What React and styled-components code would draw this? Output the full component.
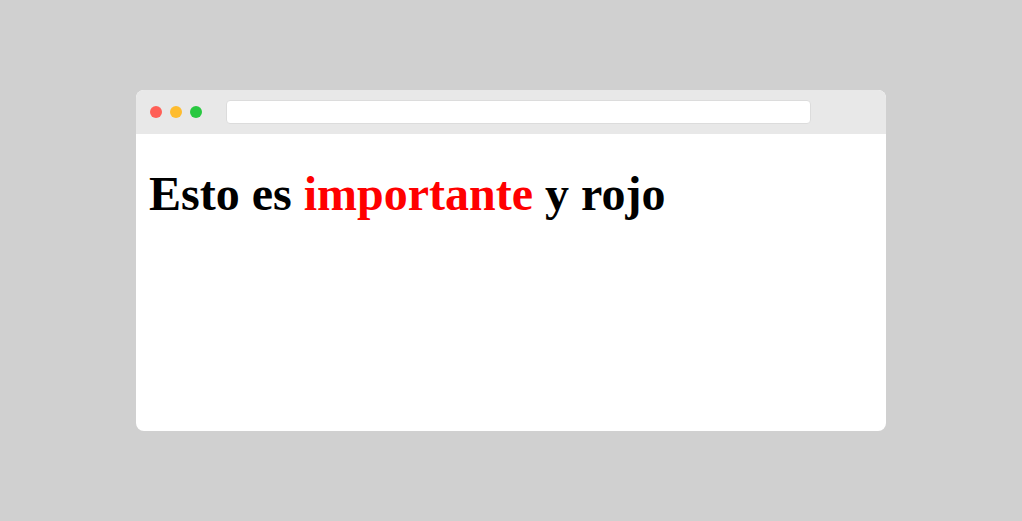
import React from "react";
import styled, { createGlobalStyle } from "styled-components";

const Global = createGlobalStyle`
  html, body { margin: 0; padding: 0; }
  body { background: #d0d0d0; width: 1022px; height: 521px; overflow: hidden; }
`;

const Page = styled.div`
  width: 1022px;
  height: 521px;
  display: flex;
  align-items: flex-start;
  justify-content: center;
  padding-top: 90px;
  box-sizing: border-box;
`;

const Window = styled.div`
  width: 750px;
  height: 341px;
  background: #ffffff;
  border-radius: 8px;
  overflow: hidden;
  display: flex;
  flex-direction: column;
`;

const TitleBar = styled.div`
  height: 44px;
  background: #e8e8e8;
  display: flex;
  align-items: center;
  padding: 0 14px;
  box-sizing: border-box;
`;

const Dots = styled.div`
  display: flex;
  gap: 8px;
`;

const Dot = styled.span`
  width: 12px;
  height: 12px;
  border-radius: 50%;
  background: ${(p) => p.$color};
`;

const AddressBar = styled.div`
  margin-left: 24px;
  width: 585px;
  height: 24px;
  background: #ffffff;
  border: 1px solid #dcdcdc;
  border-radius: 4px;
  box-sizing: border-box;
`;

const Content = styled.div`
  padding: 0 13px;
`;

const Heading = styled.h1`
  font-family: "Liberation Serif", "Times New Roman", serif;
  font-weight: bold;
  font-size: 48px;
  margin: 32px 0 0;
  color: #000000;
  line-height: 55px;
`;

const Red = styled.span`
  color: #ff0000;
`;

export default function App() {
  return (
    <>
      <Global />
      <Page>
        <Window>
          <TitleBar>
            <Dots>
              <Dot $color="#ff5f57" />
              <Dot $color="#febc2e" />
              <Dot $color="#28c840" />
            </Dots>
            <AddressBar />
          </TitleBar>
          <Content>
            <Heading>
              Esto es <Red>importante</Red> y rojo
            </Heading>
          </Content>
        </Window>
      </Page>
    </>
  );
}
